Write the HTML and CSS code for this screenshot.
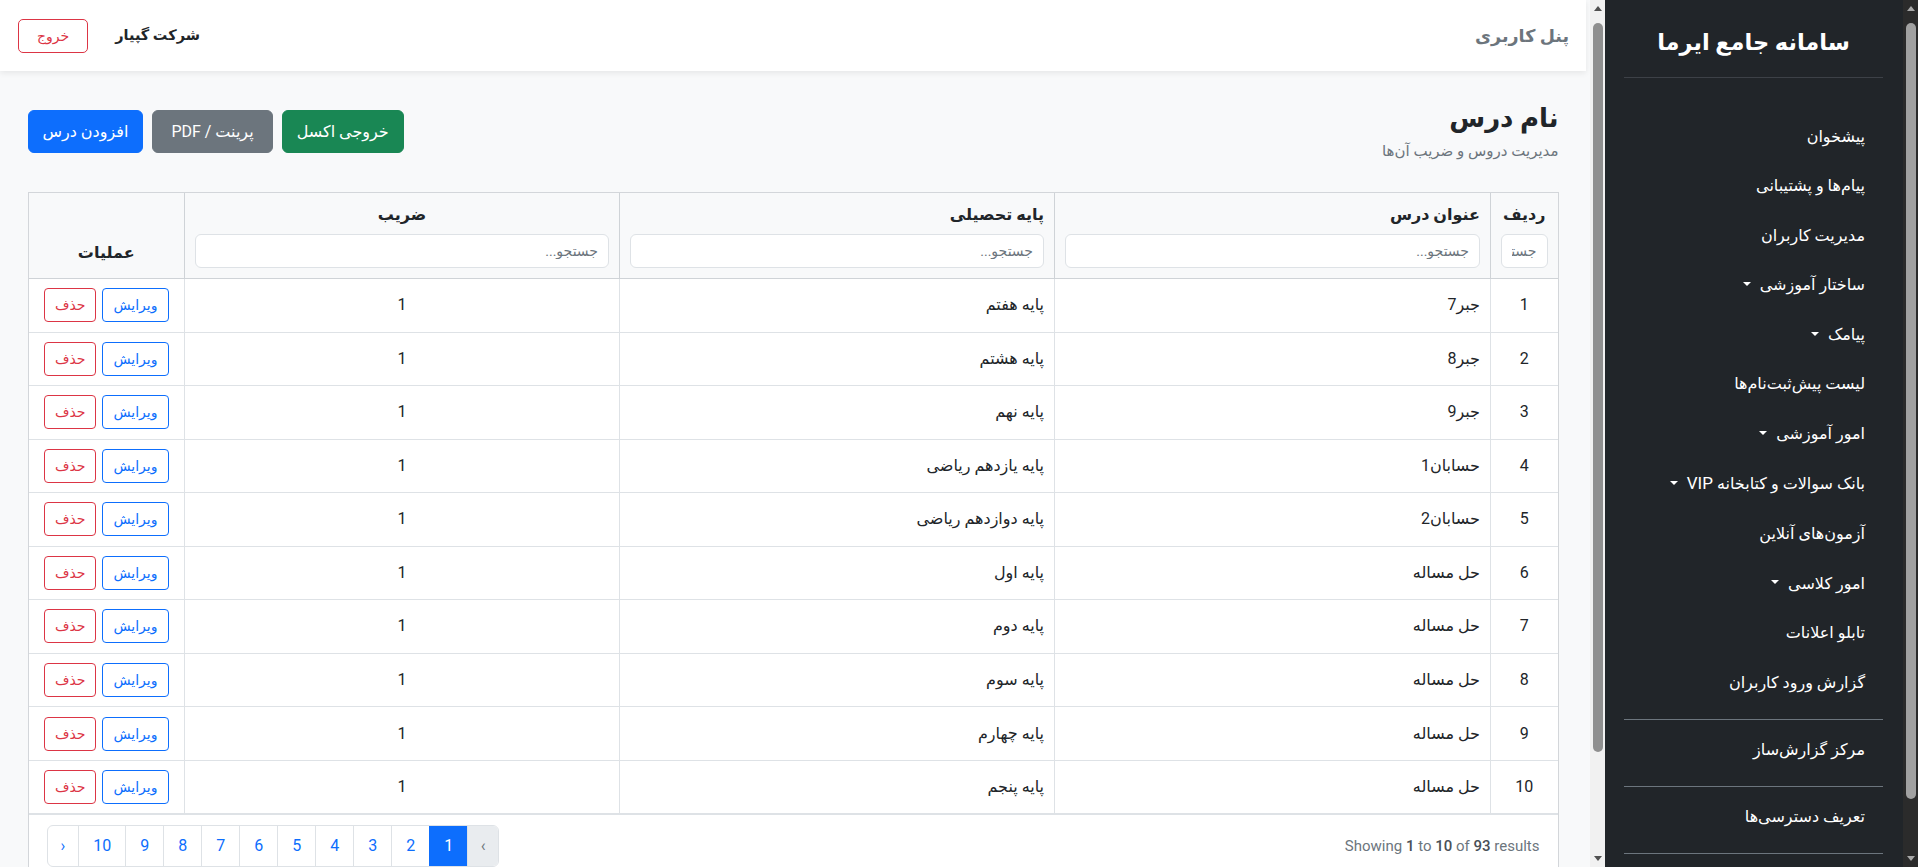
FILE: index.html
```html
<!DOCTYPE html>
<html lang="fa">
<head>
<meta charset="utf-8">
<title>نام درس</title>
<link rel="stylesheet" href="styles.css">
</head>
<body>
<div class="app">
  <main class="main">
    <div class="main-inner" dir="rtl">
      <header class="topbar">
        <div class="brand">پنل کاربری</div>
        <div class="topbar-left">
          <span class="company">شرکت گپیار</span>
          <button class="btn-logout">خروج</button>
        </div>
      </header>
      <div class="content">
        <div class="page-head">
          <div class="page-title">
            <h1>نام درس</h1>
            <p class="subtitle">مدیریت دروس و ضریب آن‌ها</p>
          </div>
          <div class="actions">
            <button class="btn btn-success">خروجی اکسل</button>
            <button class="btn btn-secondary">پرینت / PDF</button>
            <button class="btn btn-primary">افزودن درس</button>
          </div>
        </div>
        <div class="card">
          <table class="grid">
            <colgroup>
              <col class="c-idx"><col class="c-title"><col class="c-grade"><col class="c-coef"><col class="c-ops">
            </colgroup>
            <thead>
              <tr>
                <th class="center"><span class="th-label">ردیف</span><input class="search" placeholder="جستجو..."></th>
                <th><span class="th-label">عنوان درس</span><input class="search" placeholder="جستجو..."></th>
                <th><span class="th-label">پایه تحصیلی</span><input class="search" placeholder="جستجو..."></th>
                <th class="center"><span class="th-label">ضریب</span><input class="search" placeholder="جستجو..."></th>
                <th class="center th-ops">عملیات</th>
              </tr>
            </thead>
            <tbody>
              <tr><td class="center">1</td><td>جبر7</td><td>پایه هفتم</td><td class="center">1</td><td class="center ops"><button class="btn-sm btn-edit">ویرایش</button><button class="btn-sm btn-del">حذف</button></td></tr>
              <tr><td class="center">2</td><td>جبر8</td><td>پایه هشتم</td><td class="center">1</td><td class="center ops"><button class="btn-sm btn-edit">ویرایش</button><button class="btn-sm btn-del">حذف</button></td></tr>
              <tr><td class="center">3</td><td>جبر9</td><td>پایه نهم</td><td class="center">1</td><td class="center ops"><button class="btn-sm btn-edit">ویرایش</button><button class="btn-sm btn-del">حذف</button></td></tr>
              <tr><td class="center">4</td><td>حسابان1</td><td>پایه یازدهم ریاضی</td><td class="center">1</td><td class="center ops"><button class="btn-sm btn-edit">ویرایش</button><button class="btn-sm btn-del">حذف</button></td></tr>
              <tr><td class="center">5</td><td>حسابان2</td><td>پایه دوازدهم ریاضی</td><td class="center">1</td><td class="center ops"><button class="btn-sm btn-edit">ویرایش</button><button class="btn-sm btn-del">حذف</button></td></tr>
              <tr><td class="center">6</td><td>حل مساله</td><td>پایه اول</td><td class="center">1</td><td class="center ops"><button class="btn-sm btn-edit">ویرایش</button><button class="btn-sm btn-del">حذف</button></td></tr>
              <tr><td class="center">7</td><td>حل مساله</td><td>پایه دوم</td><td class="center">1</td><td class="center ops"><button class="btn-sm btn-edit">ویرایش</button><button class="btn-sm btn-del">حذف</button></td></tr>
              <tr><td class="center">8</td><td>حل مساله</td><td>پایه سوم</td><td class="center">1</td><td class="center ops"><button class="btn-sm btn-edit">ویرایش</button><button class="btn-sm btn-del">حذف</button></td></tr>
              <tr><td class="center">9</td><td>حل مساله</td><td>پایه چهارم</td><td class="center">1</td><td class="center ops"><button class="btn-sm btn-edit">ویرایش</button><button class="btn-sm btn-del">حذف</button></td></tr>
              <tr><td class="center">10</td><td>حل مساله</td><td>پایه پنجم</td><td class="center">1</td><td class="center ops"><button class="btn-sm btn-edit">ویرایش</button><button class="btn-sm btn-del">حذف</button></td></tr>
            </tbody>
          </table>
          <div class="card-foot">
            <div class="showing" dir="ltr">Showing <b>1</b> to <b>10</b> of <b>93</b> results</div>
            <nav class="pagination">
              <span class="pg pg-disabled">›</span>
              <span class="pg pg-active">1</span>
              <span class="pg">2</span>
              <span class="pg">3</span>
              <span class="pg">4</span>
              <span class="pg">5</span>
              <span class="pg">6</span>
              <span class="pg">7</span>
              <span class="pg">8</span>
              <span class="pg">9</span>
              <span class="pg">10</span>
              <span class="pg pg-arrow">‹</span>
            </nav>
          </div>
        </div>
      </div>
    </div>
  </main>
  <div class="vscroll vscroll-light">
    <span class="sc-arrow sc-up"></span>
    <span class="sc-thumb sc-thumb-main"></span>
    <span class="sc-fill"></span>
    <span class="sc-arrow sc-down"></span>
  </div>
  <aside class="sidebar">
    <div class="sidebar-inner" dir="rtl">
      <div class="sb-title">سامانه جامع ایرما</div>
      <div class="sb-hr"></div>
      <nav class="sb-menu">
        <a class="sb-item">پیشخوان</a>
        <a class="sb-item">پیام‌ها و پشتیبانی</a>
        <a class="sb-item">مدیریت کاربران</a>
        <a class="sb-item">ساختار آموزشی<span class="caret"></span></a>
        <a class="sb-item">پیامک<span class="caret"></span></a>
        <a class="sb-item">لیست پیش‌ثبت‌نام‌ها</a>
        <a class="sb-item">امور آموزشی<span class="caret"></span></a>
        <a class="sb-item">بانک سوالات و کتابخانه <span class="latin">VIP</span><span class="caret"></span></a>
        <a class="sb-item">آزمون‌های آنلاین</a>
        <a class="sb-item">امور کلاسی<span class="caret"></span></a>
        <a class="sb-item">تابلو اعلانات</a>
        <a class="sb-item">گزارش ورود کاربران</a>
        <div class="sb-sep"></div>
        <a class="sb-item">مرکز گزارش‌ساز</a>
        <div class="sb-sep"></div>
        <a class="sb-item">تعریف دسترسی‌ها</a>
        <div class="sb-sep"></div>
      </nav>
    </div>
  </aside>
  <div class="vscroll vscroll-dark">
    <span class="sc-arrow sc-up"></span>
    <span class="sc-thumb sc-thumb-side"></span>
    <span class="sc-fill"></span>
    <span class="sc-arrow sc-down"></span>
  </div>
</div>
</body>
</html>
```

FILE: styles.css
```css
html, body {
  margin: 0;
  height: 100%;
}
body {
  font-family: Roboto, "DejaVu Sans", sans-serif;
  font-size: 16px;
  color: #212529;
  overflow: hidden;
}
.app {
  display: flex;
  height: 100vh;
}
.main {
  flex: 1;
  min-width: 0;
  overflow: hidden;
  background: #f8f9fa;
}
.main-inner {
  margin-right: 4px;
}
.topbar {
  height: 71px;
  box-sizing: border-box;
  background: #fff;
  box-shadow: 0 2px 6px rgba(0, 0, 0, 0.08);
  display: flex;
  align-items: center;
  justify-content: space-between;
  padding: 0 17px 0 18px;
}
.brand {
  font-size: 17.5px;
  font-weight: 700;
  color: #6c757d;
}
.topbar-left {
  display: flex;
  align-items: center;
  gap: 27px;
}
.company {
  font-weight: 700;
  font-size: 14.5px;
  color: #212529;
}
.btn-logout {
  font-family: inherit;
  font-size: 14px;
  line-height: 20px;
  height: 34px;
  padding: 0 18px;
  border: 1px solid #dc3545;
  color: #dc3545;
  background: #fff;
  border-radius: 5px;
}
.content {
  padding: 30px 27.5px 113px;
}
.page-head {
  display: flex;
  justify-content: space-between;
  align-items: center;
  margin-bottom: 30px;
}
h1 {
  font-size: 26px;
  line-height: 34px;
  margin: 0 0 6px;
  font-weight: 700;
}
.subtitle {
  margin: 0;
  font-size: 15px;
  line-height: 21px;
  color: #6c757d;
}
.actions {
  display: flex;
  gap: 9px;
}
.btn {
  font-family: inherit;
  font-size: 16px;
  line-height: 24px;
  padding: 8.5px 14px;
  border: 1px solid transparent;
  border-radius: 6px;
  color: #fff;
}
.btn-success { background: #198754; border-color: #198754; }
.btn-secondary { background: #6c757d; border-color: #6c757d; padding: 8.5px 18px; }
.btn-primary { background: #0d6efd; border-color: #0d6efd; }

.card {
  background: #fff;
  border: 1px solid #d3d6da;
}
.grid {
  width: 100%;
  border-collapse: collapse;
  border-style: hidden;
  table-layout: fixed;
}
.c-idx { width: 67px; }
.c-title { width: 436px; }
.c-grade { width: 435px; }
.c-coef { width: 435px; }
.grid th {
  background: #f8f9fa;
  border: 1px solid #cfd3d7;
  padding: 10px;
  text-align: right;
  vertical-align: top;
  font-weight: 700;
}
.grid th.center, .grid td.center {
  text-align: center;
}
.grid th.th-ops {
  vertical-align: bottom;
  padding-bottom: 13px;
  line-height: 24px;
}
.th-label {
  display: block;
  line-height: 24px;
}
.search {
  display: block;
  box-sizing: border-box;
  width: 100%;
  height: 34px;
  margin-top: 7px;
  padding: 6px 10px;
  font-family: inherit;
  font-size: 14px;
  border: 1px solid #dee2e6;
  border-radius: 6px;
  background: #fff;
  direction: rtl;
}
.search::placeholder {
  color: #6c757d;
}
.grid td {
  border: 1px solid #dee2e6;
  padding: 9.27px 10px;
  vertical-align: middle;
  line-height: 24px;
}
.ops {
  white-space: nowrap;
}
.btn-sm {
  font-family: inherit;
  font-size: 14px;
  line-height: 22px;
  padding: 5px 10px;
  border-radius: 4px;
  background: transparent;
  vertical-align: middle;
}
.btn-edit {
  border: 1px solid #0d6efd;
  color: #0d6efd;
  margin-left: 6px;
}
.btn-del {
  border: 1px solid #dc3545;
  color: #dc3545;
}
.card-foot {
  display: flex;
  justify-content: space-between;
  align-items: center;
  padding: 10px 18px 11px;
  border-top: 2px solid #dee2e6;
}
.showing {
  font-size: 15px;
  color: #6c757d;
}
.showing b {
  font-weight: 500;
  color: #495057;
}
.pagination {
  display: flex;
  border: 1px solid #dee2e6;
  border-radius: 6px;
  overflow: hidden;
  height: 42px;
  box-sizing: border-box;
}
.pg {
  padding: 0 14px;
  line-height: 40px;
  color: #0d6efd;
  border-left: 1px solid #dee2e6;
  font-size: 16px;
}
.pg:last-child {
  border-left: 0;
}
.pg-active {
  background: #0d6efd;
  color: #fff;
  border-left-color: #0d6efd;
}
.pg-disabled {
  background: #e9ecef;
  color: #6c757d;
  padding: 0 12.5px;
}
.pg-arrow {
  padding: 0 13px;
}

/* drawn scrollbars */
.vscroll {
  width: 15px;
  flex: none;
  display: flex;
  flex-direction: column;
  align-items: center;
}
.vscroll-light {
  background: #f1f1f1;
  color: #505050;
}
.vscroll-dark {
  background: #2b2b2b;
  color: #a8a8a8;
}
.sc-arrow {
  flex: none;
  width: 0;
  height: 0;
  border-left: 4.5px solid transparent;
  border-right: 4.5px solid transparent;
}
.sc-up {
  margin: 6px 0 0;
  border-bottom: 5px solid currentColor;
}
.sc-down {
  margin: 0 0 6px;
  border-top: 5px solid currentColor;
}
.sc-thumb {
  flex: none;
  width: 10px;
  border-radius: 5px;
  margin-top: 12px;
}
.vscroll-light .sc-thumb { background: #8f8f8f; }
.vscroll-dark .sc-thumb { background: #a1a1a1; }
.sc-thumb-main { height: 729px; }
.sc-thumb-side { height: 776px; }
.sc-fill { flex: 1; }

.sidebar {
  width: 298px;
  flex: none;
  overflow: hidden;
  background: #212529;
  color: #fff;
}
.sidebar-inner {
  padding: 0 20px 76px 19px;
}
.sb-title {
  text-align: center;
  font-size: 22.5px;
  font-weight: 700;
  line-height: 29px;
  padding-top: 28px;
  margin-bottom: 20px;
}
.sb-hr {
  height: 1px;
  background: #3d4147;
}
.sb-menu {
  margin-top: 34px;
}
.sb-item {
  display: block;
  padding: 12.775px 18px;
  line-height: 24px;
  font-size: 16px;
  color: #fff;
}
.latin {
  font-size: 17px;
}
.caret {
  display: inline-block;
  margin-right: 9px;
  vertical-align: 0.255em;
  border-top: 0.3em solid;
  border-left: 0.3em solid transparent;
  border-right: 0.3em solid transparent;
}
.sb-sep {
  height: 1px;
  background: #6c757d;
  margin: 11.5px 0 5px;
}
```
